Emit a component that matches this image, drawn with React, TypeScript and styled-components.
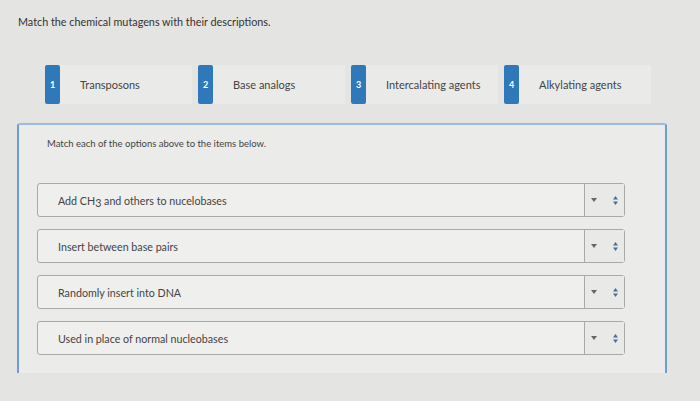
import { createGlobalStyle } from "styled-components";
import styled from "styled-components";

const GlobalStyle = createGlobalStyle`
  html, body {
    margin: 0;
    padding: 0;
    background: #e4e4e2;
  }
  body {
    font-family: Lato, "Open Sans", sans-serif;
    color: #3a3a3a;
  }
`;

const Page = styled.div`
  width: 700px;
  height: 401px;
  overflow: hidden;
  padding: 15px 0 0 0;
  box-sizing: border-box;
`;

const Title = styled.div`
  font-size: 10.8px;
  margin-left: 18px;
  color: #333;
`;

const Options = styled.div`
  display: flex;
  gap: 6px;
  margin: 37px 0 0 45px;
`;

const Chip = styled.div`
  display: flex;
  align-items: center;
  width: 147px;
  height: 39px;
  background: #eaeae9;
`;

const Badge = styled.div`
  width: 15px;
  height: 100%;
  background: #2f79ba;
  border-radius: 2px;
  color: #fff;
  font-size: 9px;
  font-weight: 700;
  display: flex;
  align-items: center;
  justify-content: center;
`;

const ChipLabel = styled.span`
  margin-left: 20px;
  font-size: 11px;
  color: #444;
`;

const Panel = styled.div`
  margin: 19px 0 0 17px;
  width: 650px;
  height: 250px;
  box-sizing: border-box;
  border: 2px solid #6f9ccf;
  border-bottom: none;
  border-top-color: #9fbbdb;
  border-radius: 3px 3px 0 0;
  background: #ebebe9;
  padding: 13px 0 0 18px;
`;

const Instruction = styled.div`
  font-size: 9.5px;
  color: #444;
  margin-left: 10px;
`;

const Rows = styled.div`
  display: flex;
  flex-direction: column;
  gap: 12px;
  margin-top: 34px;
`;

const Row = styled.div`
  display: flex;
  width: 588px;
  height: 34px;
  box-sizing: border-box;
  border: 1px solid #a9a9a7;
  border-radius: 3px;
  background: #efefed;
`;

const RowText = styled.div`
  flex: 1;
  display: flex;
  align-items: center;
  padding-left: 20px;
  font-size: 10.7px;
  color: #444;

  sub {
    font-size: 10.7px;
    vertical-align: -2px;
    line-height: 0;
  }
`;

const Select = styled.div`
  width: 40px;
  border-left: 1px solid #a9a9a7;
  background: #e9e9e7;
  display: flex;
  align-items: center;
  justify-content: space-between;
  padding: 0 6px 0 6px;
  box-sizing: border-box;
`;

const options = ["Transposons", "Base analogs", "Intercalating agents", "Alkylating agents"];

function Caret() {
  return (
    <svg width="6" height="4" viewBox="0 0 6 4">
      <path d="M0 0 L6 0 L3 4 Z" fill="#666" />
    </svg>
  );
}

function Updown() {
  return (
    <svg width="5" height="9" viewBox="0 0 5 9">
      <path d="M0 3.5 L5 3.5 L2.5 0 Z" fill="#4a6e96" />
      <path d="M0 5.5 L5 5.5 L2.5 9 Z" fill="#4a6e96" />
    </svg>
  );
}

export default function App() {
  return (
    <>
      <GlobalStyle />
      <Page>
        <Title>Match the chemical mutagens with their descriptions.</Title>
        <Options>
          {options.map((o, i) => (
            <Chip key={o}>
              <Badge>{i + 1}</Badge>
              <ChipLabel>{o}</ChipLabel>
            </Chip>
          ))}
        </Options>
        <Panel>
          <Instruction>Match each of the options above to the items below.</Instruction>
          <Rows>
            <Row>
              <RowText>
                <span>
                  Add CH<sub>3</sub> and others to nucelobases
                </span>
              </RowText>
              <Select>
                <Caret />
                <Updown />
              </Select>
            </Row>
            <Row>
              <RowText>Insert between base pairs</RowText>
              <Select>
                <Caret />
                <Updown />
              </Select>
            </Row>
            <Row>
              <RowText>Randomly insert into DNA</RowText>
              <Select>
                <Caret />
                <Updown />
              </Select>
            </Row>
            <Row>
              <RowText>Used in place of normal nucleobases</RowText>
              <Select>
                <Caret />
                <Updown />
              </Select>
            </Row>
          </Rows>
        </Panel>
      </Page>
    </>
  );
}
